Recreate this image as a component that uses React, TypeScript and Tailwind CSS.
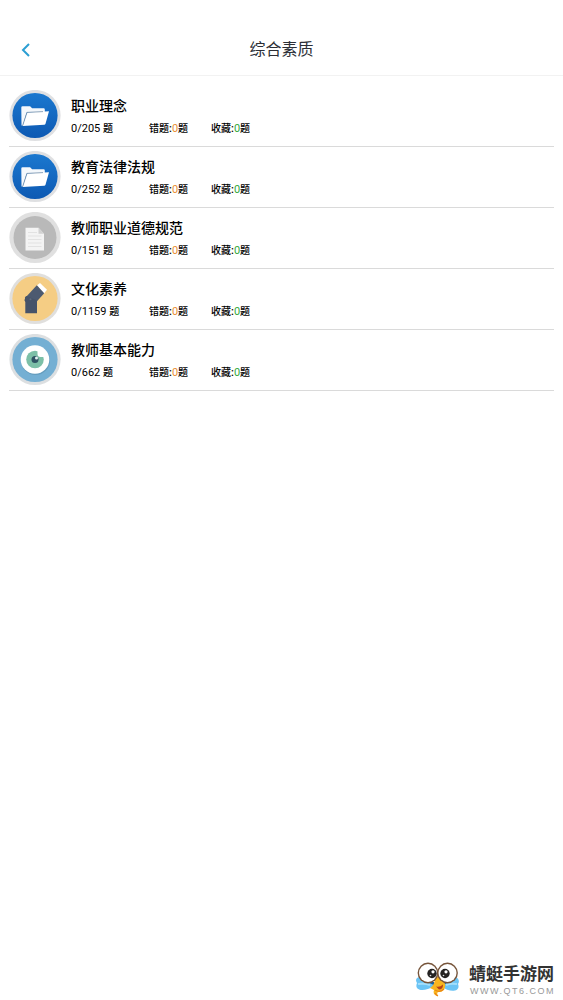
import React from 'react';

function Folder() {
  return (
    <svg viewBox="0 0 52 52" className="size-[52px]" aria-hidden="true">
      <defs>
        <linearGradient id="folderBlue" x1="0" y1="0" x2="0" y2="1">
          <stop offset="0" stopColor="#1b78cf" />
          <stop offset="1" stopColor="#0d59b3" />
        </linearGradient>
      </defs>
      <circle cx="26" cy="25.5" r="25.6" fill="#dfe0e2" />
      <circle cx="26" cy="25.5" r="22.6" fill="url(#folderBlue)" />
      <path d="M12.3 17.5 q0-1.3 1.3-1.3 h7.5 l2 2 h11.5 q1.2 0 1.2 1.2 v3 H17.6 l-3.8 13 h-1.3z" fill="#f4f8fc" />
      <path d="M18 22.6 L40 21.3 l-3.5 12.5 q-.3 1-1.3 1 L13.6 36 z" fill="#fff" />
      <path d="M13.6 35.7 L18 22.4 L34 21.6" stroke="#5f7f9f" strokeWidth=".7" fill="none" />
    </svg>
  );
}

function Document() {
  return (
    <svg viewBox="0 0 52 52" className="size-[52px]" aria-hidden="true">
      <circle cx="26" cy="25.5" r="25.6" fill="#e0e0e0" />
      <circle cx="26" cy="25.5" r="21.5" fill="#b9b9b9" />
      <path d="M16.5 15.8 h13 l5.5 6 v16.7 H16.5z" fill="#f4f4f4" />
      <path d="M29.5 15.8 v6 h5.5z" fill="#d2d2d2" />
      <path d="M19 20.5h9M19 24h13.5M19 27.5h13.5M19 31h13.5M19 34.5h13.5" stroke="#e2e2e2" strokeWidth="1" />
    </svg>
  );
}

function Usb() {
  return (
    <svg viewBox="0 0 52 52" className="size-[52px]" aria-hidden="true">
      <circle cx="26" cy="25.5" r="25.6" fill="#e0dfdd" />
      <circle cx="26" cy="25.5" r="22.6" fill="#f5cd84" />
      <path d="M28 12.3 L31 10 L38 16.7 L35 20.5z" fill="#fff" />
      <path d="M17 24 L27.8 12.3 L35.2 20.3 L28 28.2z" fill="#4c5a70" />
      <path d="M16 25.5 q-.5-2 2-2.5 l10 4.5 v12.7 H16.3 V29 q-1.6-1.6-.3-3.5z" fill="#465369" />
      <circle cx="21.5" cy="26.3" r="1" fill="#5d6a7d" />
    </svg>
  );
}

function Eye() {
  return (
    <svg viewBox="0 0 52 52" className="size-[52px]" aria-hidden="true">
      <circle cx="26" cy="25.5" r="25.6" fill="#dcdfe1" />
      <circle cx="26" cy="25.5" r="22.6" fill="#74afd3" />
      <circle cx="26.5" cy="26.5" r="14.5" fill="#659dbe" />
      <circle cx="26" cy="25.5" r="14.3" fill="#fff" />
      <circle cx="26" cy="25.5" r="8.8" fill="#7cbfa7" />
      <path d="M28.5 16 V20 q0 3 3 3 h4.5 V16z" fill="#fff" />
      <circle cx="26" cy="25.5" r="3.5" fill="#2f5364" />
      <circle cx="27.5" cy="24.1" r="1.5" fill="#e5f3f2" />
    </svg>
  );
}

const subjects = [
  { name: '职业理念', total: 205, Icon: Folder },
  { name: '教育法律法规', total: 252, Icon: Folder },
  { name: '教师职业道德规范', total: 151, Icon: Document },
  { name: '文化素养', total: 1159, Icon: Usb },
  { name: '教师基本能力', total: 662, Icon: Eye },
];

function Count({ label, color }: { label: string; color: string }) {
  return (
    <span className="text-[10px]">
      {label}
      <span className="text-[11px]">:</span>
      <span className={`text-[11px] font-normal ${color}`}>0</span>题
    </span>
  );
}

function Dragonfly() {
  return (
    <svg viewBox="0 0 46 36" className="h-9 w-[46px]" aria-hidden="true">
      <path d="M12 17 C3 12-1 17 2 21 C-1 28 7 31 20 24z M33 17 C41 12 46 18 43 22 C46 29 36 32 26 24z" fill="#6bc4f5" />
      <path d="M3 22 q7-1 12 1 M42 22 q-7-1-11 1" fill="none" stroke="#a3dffc" strokeWidth="2" />
      <path d="M10 19 l9 1 2 4z M35 19 l-7 1 -1 4z" fill="#1b5f9c" />
      <path d="M20 16 q3-3 6 0 q5 4 4 9 q-1 5-6 5 q-3 0-1 4 q-6-1-4-6 l-4-2 q5-3 5-10z" fill="#f9b51e" />
      <path d="M20 28 q5 3 9-1 M20 31 q1 2 3 3" stroke="#e98516" fill="none" strokeWidth="1.2" />
      <path d="M21 24.5 q4 1 7-2 q0 5-4 5z" fill="#b5401b" />
      <circle cx="13" cy="11" r="10.4" fill="#76543a" />
      <circle cx="13" cy="11" r="9" fill="#fff" />
      <circle cx="32.5" cy="11" r="10.4" fill="#76543a" />
      <circle cx="32.5" cy="11" r="9" fill="#fff" />
      <circle cx="17" cy="11.5" r="4.7" fill="#252322" />
      <circle cx="30" cy="11.5" r="4.7" fill="#252322" />
      <circle cx="18" cy="9.8" r="1.6" fill="#fff" />
      <circle cx="31" cy="9.8" r="1.6" fill="#fff" />
      <circle cx="15.5" cy="13.5" r=".8" fill="#ddd" />
      <circle cx="28.5" cy="13.5" r=".8" fill="#ddd" />
    </svg>
  );
}

export default function App() {
  return (
    <div className="flex min-h-screen flex-col bg-white font-['Roboto','Noto_Sans_CJK_SC',sans-serif] text-black">
      <header className="grid grid-cols-[52px_1fr_52px] items-center border-b border-[#f2f2f2] pt-6">
        <button type="button" aria-label="返回" className="flex h-[51px] items-center justify-center">
          <svg viewBox="0 0 10 14" className="h-3.5 w-2.5" fill="none" stroke="#2c9fd3" strokeWidth="2" aria-hidden="true">
            <path d="M8 1 L2 7 L8 13" />
          </svg>
        </button>
        <h1 className="text-center text-base text-[#2c2f36]">综合素质</h1>
      </header>
      <main className="flex-1 px-[9px] pt-[10px]">
        <ul>
          {subjects.map(({ name, total, Icon }) => (
            <li key={name} className="border-b border-[#dadada]">
              <a href="#" className="flex h-[60px] items-center gap-[10px]">
                <Icon />
                <div className="flex flex-col gap-1 pt-px">
                  <h2 className="text-[14px] leading-5 font-medium">{name}</h2>
                  <div className="flex text-[11px] leading-[18px] font-medium">
                    <span className="w-[78px]">
                      <span className="font-normal">0/{total} </span>
                      <span className="text-[10px]">题</span>
                    </span>
                    <span className="w-[62px]">
                      <Count label="错题" color="text-[#e98f35]" />
                    </span>
                    <Count label="收藏" color="text-[#35a83c]" />
                  </div>
                </div>
              </a>
            </li>
          ))}
        </ul>
      </main>
      <footer className="flex items-center justify-end gap-2 pr-2 pb-[2px]">
        <Dragonfly />
        <div className="flex flex-col">
          <strong className="text-[17px] leading-[22px] font-bold text-[#333]">蜻蜓手游网</strong>
          <span className="pl-px font-['Liberation_Sans',sans-serif] text-[9px] leading-3 tracking-[1.5px] text-[#999]">WWW.QT6.COM</span>
        </div>
      </footer>
    </div>
  );
}
